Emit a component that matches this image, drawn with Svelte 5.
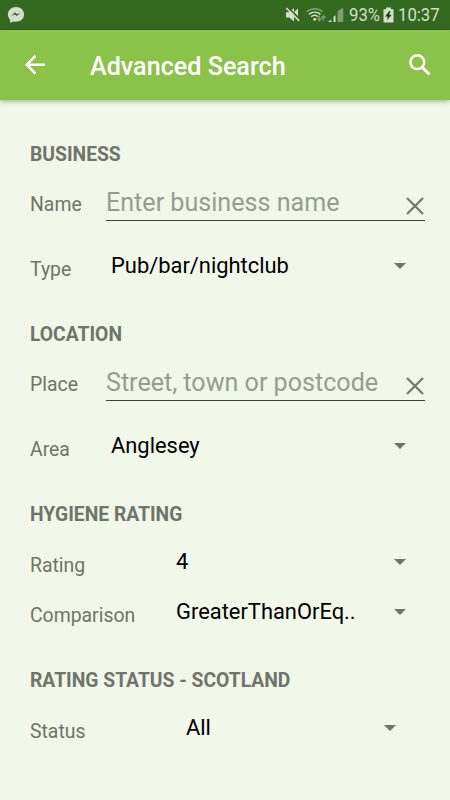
<script>
  // Label widths differ per section, so each one carries its own layout modifier.
  const sections = [
    {
      title: 'BUSINESS',
      layout: 'narrow',
      rows: [
        { label: 'Name', kind: 'input', placeholder: 'Enter business name' },
        { label: 'Type', kind: 'select', value: 'Pub/bar/nightclub' }
      ]
    },
    {
      title: 'LOCATION',
      layout: 'narrow',
      rows: [
        { label: 'Place', kind: 'input', placeholder: 'Street, town or postcode' },
        { label: 'Area', kind: 'select', value: 'Anglesey' }
      ]
    },
    {
      title: 'HYGIENE RATING',
      layout: 'wide',
      rows: [
        { label: 'Rating', kind: 'select', value: '4' },
        { label: 'Comparison', kind: 'select', value: 'GreaterThanOrEq..' }
      ]
    },
    {
      title: 'RATING STATUS - SCOTLAND',
      layout: 'widest',
      rows: [{ label: 'Status', kind: 'select', value: 'All' }]
    }
  ];

  let text = $state({ Name: '', Place: '' });
</script>

<div class="screen">
  <div class="status-bar">
    <svg class="messenger" width="18" height="18" viewBox="0 0 18 18">
      <path fill="#d3dfcd" d="M9 .9C4.300.9.9 4.200.9 8.300c0 2.300.8 4 2.100 5.400l.2 3.200 2.900-1.500c.9.300 1.900.4 2.900.4 4.700 0 8.100-3.300 8.100-7.500S13.700.9 9 .9z" />
      <path fill="#33691e" d="M4.300 9.900 8 6.300l2.300 1.900 3.300-1.800L10 10 7.800 8.400z" />
    </svg>
    <div class="tray">
      <svg width="16" height="16" viewBox="0 0 16 16">
        <path fill="#d3dfcd" d="M1 5.200h3.200L9 1v13.500l-4.800-4H1zM9 5l4-3.500v8z" />
        <path stroke="#33691e" stroke-width="1.500" d="M2.900.3 15.600 13" />
        <path stroke="#d3dfcd" stroke-width="1.700" d="M1.300 1 14.200 13.900" />
      </svg>
      <svg class="wifi" width="20" height="16" viewBox="0 0 20 16">
        <g fill="none" stroke-width="1.500">
          <path stroke="#7f9f72" d="M.8 4.700c4.600-4.100 11.200-4.100 15.800 0" />
          <path stroke="#d3dfcd" d="M3 7.400c3.400-3 8-3 11.400 0M5.300 9.800c2-1.800 4.800-1.800 6.800 0" />
        </g>
        <circle cx="8.700" cy="12.300" r="1.500" fill="#d3dfcd" />
        <g fill="none" stroke="#7f9f72" stroke-width="1.300">
          <path d="M13.300 8.500v5M11.200 11.500l2.100 2.200 2.100-2.200M17.300 14V9M15.200 11l2.100-2.200 2.100 2.200" />
        </g>
      </svg>
      <svg class="signal" width="17" height="16" viewBox="0 0 17 16">
        <path fill="#d3dfcd" d="M.5 15v-.8l2.800-1.400V15zM5.500 15V9.700l2-1.400V15z" />
        <path fill="#7f9f72" d="M9.500 15V4.500L15.200.5V15z" />
      </svg>
      <span class="percent">93%</span>
      <svg class="battery" width="11" height="16" viewBox="0 0 11 16">
        <path fill="#d3dfcd" d="M3 .5h5v1.700h2.500v13.300H.5V2.200H3z" />
        <path fill="#1d3f10" d="M6.300 4 2 9.600h2.700L4 13.200l4.700-5.500H6.200L7.500 4z" />
      </svg>
      <span class="clock">10:37</span>
    </div>
  </div>

  <header class="app-bar">
    <button class="icon-btn" aria-label="Back">
      <svg width="20" height="20" viewBox="0 0 20 20" fill="none" stroke="#fff" stroke-width="2.500">
        <path d="M10.400.9 1.800 9.700l8.600 9M2 9.800h18" />
      </svg>
    </button>
    <h1>Advanced Search</h1>
    <button class="icon-btn" aria-label="Search">
      <svg width="24" height="24" viewBox="0 0 24 24" fill="none" stroke="#fff" stroke-width="2.500">
        <circle cx="9.300" cy="9.200" r="6.900" />
        <path stroke-width="3" d="m14.200 14.200 7.300 7.300" />
      </svg>
    </button>
  </header>

  <main>
    {#each sections as section}
      <section class={section.layout}>
        <h2>{section.title}</h2>
        <div class="rows">
          {#each section.rows as row}
            <div class="row {row.kind}">
              <span class="label">{row.label}</span>
              {#if row.kind === 'input'}
                <div class="field">
                  <input type="text" aria-label={row.label} placeholder={row.placeholder} bind:value={text[row.label]} />
                  <button class="clear" aria-label="Clear" onclick={() => (text[row.label] = '')}>
                    <svg width="18" height="18" viewBox="0 0 18 18" stroke="#757972" stroke-width="2.300">
                      <path d="m1 1 16 16M17 1 1 17" />
                    </svg>
                  </button>
                </div>
              {:else}
                <button class="spinner">
                  <span>{row.value}</span>
                  <svg width="12" height="6" viewBox="0 0 12 6"><path fill="#70746b" d="M0 0h12L6 6z" /></svg>
                </button>
              {/if}
            </div>
          {/each}
        </div>
      </section>
    {/each}
  </main>
</div>

<style>
  :global(body) { margin: 0; background: #f1f7e9; }

  .screen {
    width: 450px; height: 800px; overflow: hidden;
    display: flex; flex-direction: column;
    font-family: Roboto, sans-serif; background: #f1f7e9;
  }
  svg { display: block; flex: none; }
  button {
    padding: 0; border: none; background: none;
    font: inherit; color: inherit; cursor: pointer;
  }

  .status-bar {
    height: 30px; padding: 0 10px 0 7px; box-sizing: border-box; flex: none;
    display: flex; align-items: center; justify-content: space-between;
    background: #33691e; color: #d3dfcd; font-size: 19px;
  }
  .tray { display: flex; align-items: center; margin-left: -1px; }
  .wifi { margin-left: 5px; }
  .signal { margin-left: 2px; }
  /* the system clock font is a narrow cut */
  .percent, .clock {
    display: block; white-space: nowrap; padding-bottom: 2px;
    transform: scaleX(0.88); transform-origin: left center;
  }
  .percent { width: 30px; margin-left: 4px; }
  .battery { margin-left: 4px; }
  .clock { width: 42px; margin-left: 4px; }

  .app-bar {
    height: 70px; padding: 0 18px 0 25px; box-sizing: border-box; flex: none;
    display: flex; align-items: center;
    background: #8bc34a; color: #fff;
    box-shadow: 0 1px 5px rgba(0, 0, 0, 0.35);
  }
  h1 {
    flex: 1; margin: 0 0 0 45px; padding-top: 3px;
    font-size: 25.150px; line-height: 30px; font-weight: 500;
  }

  main { display: flex; flex-direction: column; gap: 38px; padding: 42px 25px 0 30px; }
  h2 {
    margin: 0 0 17px; padding-top: 1px;
    font-size: 19.300px; line-height: 24px; font-weight: 700; color: #70746b;
  }

  .rows { display: flex; flex-direction: column; gap: 26px; }
  .row { display: flex; height: 37px; align-items: center; }
  .label {
    flex: none; width: 76px; padding-top: 4px;
    font-size: 19.400px; line-height: 24px; color: #70746b;
  }
  .select .label { padding-top: 9px; }

  .field {
    flex: 1; min-width: 0; height: 37px; box-sizing: border-box;
    display: flex; align-items: center; border-bottom: 1px solid #3f443c;
  }
  input {
    flex: 1; min-width: 0; height: 36px; padding: 0; border: none; outline: none;
    background: none; font: 25.100px Roboto, sans-serif; color: #000;
  }
  input::placeholder { color: #979d90; opacity: 1; }
  .clear { padding-top: 7px; margin-right: 1px; }

  .spinner {
    flex: 1; min-width: 0; padding: 0 19px 0 5px;
    display: flex; align-items: center; justify-content: space-between;
    font-size: 21.900px; line-height: 24px; color: #000;
  }

  .wide h2 { margin-bottom: 16px; }
  .widest h2 { margin-bottom: 16px; }
  .wide .rows { gap: 13px; }
  .wide .label { width: 141px; }
  .widest .label { width: 151px; }
  .widest .spinner { padding-right: 29px; }
</style>
